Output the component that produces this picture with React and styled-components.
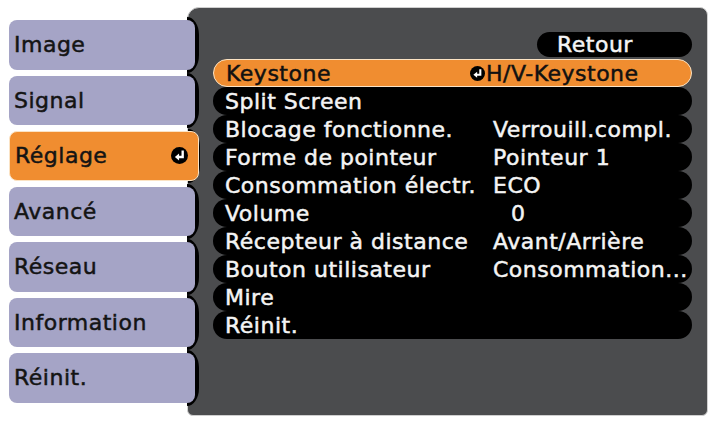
import styled, { createGlobalStyle } from 'styled-components';

const GlobalStyle = createGlobalStyle`
  html, body {
    margin: 0;
    padding: 0;
    background: #ffffff;
  }
  body {
    font-family: "DejaVu Sans", "Liberation Sans", sans-serif;
  }
`;

const Screen = styled.div`
  display: flex;
  align-items: flex-start;
  padding: 7px 4px 0 9px;
  width: 712px;
  height: 426px;
  box-sizing: border-box;
`;

const Sidebar = styled.div`
  position: relative;
  z-index: 1;
  display: flex;
  flex-direction: column;
  gap: 6px;
  width: 186px;
  margin-top: 13px;
  flex-shrink: 0;
`;

const Tab = styled.div`
  position: relative;
  display: flex;
  align-items: center;
  justify-content: space-between;
  box-sizing: border-box;
  height: 49.5px;
  width: ${p => (p.$active ? '190px' : '186px')};
  padding: 0 10px 0 5px;
  border-radius: 8px;
  background: ${p => (p.$active ? '#f08d30' : '#a5a4c6')};
  border: ${p => (p.$active ? '1px solid #fbe3c4' : 'none')};
  color: #141414;
  font-size: 22px;
  letter-spacing: 0.5px;
  -webkit-text-stroke: 0.5px #141414;

  &::after {
    content: "";
    position: absolute;
    top: -3px;
    bottom: -3px;
    left: 178px;
    width: 12px;
    background: #000;
    border-radius: 0 12px 12px 0 / 0 18px 18px 0;
    z-index: -1;
  }
`;

const Panel = styled.div`
  flex: 1;
  margin-left: -8px;
  height: 409px;
  box-sizing: border-box;
  display: flex;
  flex-direction: column;
  padding: 24px 15px 0 25px;
  background: #4b4c4e;
  border: 1px solid #cfcfcf;
  border-radius: 12px 8px 6px 6px;
`;

const BackPill = styled.div`
  align-self: flex-end;
  width: 155px;
  height: 25px;
  margin-bottom: 2px;
  display: flex;
  align-items: center;
  box-sizing: border-box;
  padding-left: 20px;
  background: #000;
  border-radius: 13px;
  color: #f4f4f4;
  font-size: 22px;
  letter-spacing: 0.5px;
  -webkit-text-stroke: 0.5px #f4f4f4;
`;

const List = styled.div`
  display: flex;
  flex-direction: column;
`;

const Row = styled.div`
  display: grid;
  grid-template-columns: 268px 1fr;
  align-items: center;
  height: 28px;
  box-sizing: border-box;
  padding-left: 12px;
  border-radius: 14px;
  background: ${p => (p.$active ? '#f08d30' : '#000')};
  border: ${p => (p.$active ? '1px solid #fbe3c4' : 'none')};
  color: ${p => (p.$active ? '#111' : '#f4f4f4')};
  -webkit-text-stroke: 0.5px ${p => (p.$active ? '#111' : '#f4f4f4')};
  font-size: 22px;
  letter-spacing: 0.5px;
  white-space: nowrap;
`;

const Value = styled.span`
  display: flex;
  align-items: center;
  gap: 1px;
  margin-left: ${p => p.$shift || 0}px;
`;

const Enter = styled.svg`
  flex-shrink: 0;
  display: block;
  width: ${p => p.$size}px;
  height: ${p => p.$size}px;
`;

const EnterIcon = ({ size = 16 }) => (
  <Enter $size={size} viewBox="0 0 16 16">
    <circle cx="8" cy="8" r="8" fill="#000" />
    <path d="M11 3.4 V9.4 H6.4" stroke="#fff" strokeWidth="2.2" fill="none" />
    <path d="M7.6 6.2 L3.6 9.4 L7.6 12.6 Z" fill="#fff" />
  </Enter>
);

const tabs = ['Image', 'Signal', 'Réglage', 'Avancé', 'Réseau', 'Information', 'Réinit.'];

const rows = [
  { label: 'Keystone', value: 'H/V-Keystone', enter: true, shift: -24 },
  { label: 'Split Screen' },
  { label: 'Blocage fonctionne.', value: 'Verrouill.compl.' },
  { label: 'Forme de pointeur', value: 'Pointeur 1' },
  { label: 'Consommation électr.', value: 'ECO' },
  { label: 'Volume', value: '0', shift: 18 },
  { label: 'Récepteur à distance', value: 'Avant/Arrière' },
  { label: 'Bouton utilisateur', value: 'Consommation...' },
  { label: 'Mire' },
  { label: 'Réinit.' },
];

export default function App() {
  return (
    <>
      <GlobalStyle />
      <Screen>
        <Sidebar>
          {tabs.map(t => (
            <Tab key={t} $active={t === 'Réglage'}>
              <span>{t}</span>
              {t === 'Réglage' && <EnterIcon size={17} />}
            </Tab>
          ))}
        </Sidebar>
        <Panel>
          <BackPill>Retour</BackPill>
          <List>
            {rows.map((r, i) => (
              <Row key={r.label + i} $active={i === 0}>
                <span>{r.label}</span>
                <Value $shift={r.shift}>
                  {r.enter && <EnterIcon size={15} />}
                  {r.value}
                </Value>
              </Row>
            ))}
          </List>
        </Panel>
      </Screen>
    </>
  );
}
